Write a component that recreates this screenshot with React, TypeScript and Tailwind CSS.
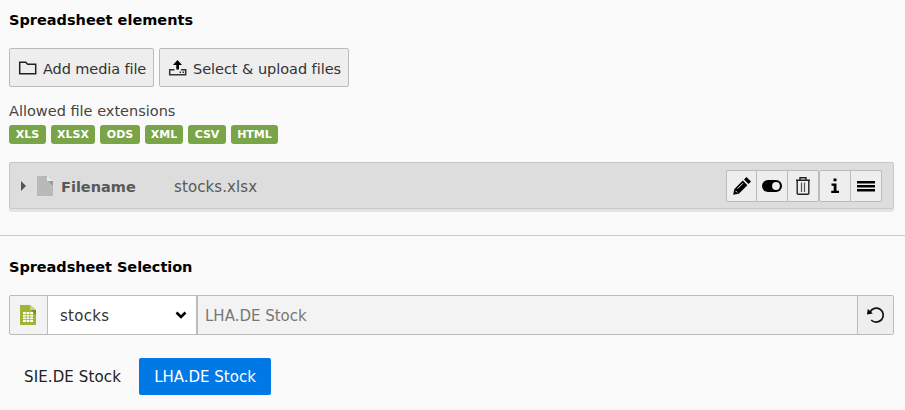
import React from "react";

const extensions = [
  { name: "XLS", width: "w-[37px]" },
  { name: "XLSX", width: "w-11" },
  { name: "ODS", width: "w-10" },
  { name: "XML", width: "w-[38px]" },
  { name: "CSV", width: "w-[38px]" },
  { name: "HTML", width: "w-[47px]" },
];

function Icon({ children }: { children: React.ReactNode }) {
  return (
    <svg width="20" height="20" viewBox="0 0 20 20" className="block shrink-0">
      {children}
    </svg>
  );
}

function FolderIcon() {
  return (
    <Icon>
      <path d="M1.7 15.8V4.2h6l2 2h8v9.6z" fill="none" stroke="#222" strokeWidth="1.5" />
    </Icon>
  );
}

function UploadIcon() {
  return (
    <Icon>
      <path d="M5 7l4.5-5L14 7h-3v4.5H8.300V7z" fill="#000" />
      <path d="M6.500 11.700H1.700v5h16v-5H13" fill="none" stroke="#333" strokeWidth="1.500" />
      <path d="M11.500 13.500H13v1.500h-1.500zM14.500 13.500H16v1.500h-1.500z" fill="#333" />
    </Icon>
  );
}

function PencilIcon() {
  return (
    <Icon>
      <path d="M1.200 18.800l1-5.600 8.600-8.600 4.600 4.600-8.600 8.600zM12 3.500L14.500 1l4.500 4.500-2.500 2.500z" fill="#000" />
      <path d="M5.500 12.700l5.500-5.500M3.500 14.800l1.700 1.700" stroke="#eee" strokeWidth="1" />
    </Icon>
  );
}

function ToggleIcon() {
  return (
    <Icon>
      <rect x="0" y="4" width="20" height="12" rx="6" fill="#000" />
      <circle cx="14" cy="10" r="3.9" fill="#eee" />
    </Icon>
  );
}

function TrashIcon() {
  return (
    <Icon>
      <path d="M3 4.300h14M7 4V1.700h6V4M4.200 5v12.300q0 1 1 1h9.600q1 0 1-1V5" fill="none" stroke="#222" strokeWidth="1.400" />
      <path d="M8.500 6.500V16M11.500 6.500V16" stroke="#555" strokeWidth="1.200" />
    </Icon>
  );
}

function InfoIcon() {
  return (
    <Icon>
      <path d="M8.500 2.500h3v2.800h-3zM6.500 7.500h5v7.200H14V17H6.200v-2.300h2.500V9.800H6.500z" fill="#000" />
    </Icon>
  );
}

function DragIcon() {
  return (
    <Icon>
      <path d="M1 5h18v2.500H1zM1 9h18v2.500H1zM1 13h18v2.500H1z" fill="#000" />
    </Icon>
  );
}

function UndoIcon() {
  return (
    <Icon>
      <path d="M4 7A7 7 0 1 1 5.200 15" fill="none" stroke="#111" strokeWidth="1.700" />
      <path d="M1 9.500l.8-5.500 5 4.500z" fill="#000" />
    </Icon>
  );
}

function ToolButton({ children, className }: { children: React.ReactNode; className: string }) {
  return (
    <button className={"flex h-8 items-center justify-center border border-[#bbb] bg-[#eee] " + className}>
      {children}
    </button>
  );
}

export default function App() {
  return (
    <main className="flex h-[410px] w-[905px] flex-col overflow-hidden bg-[#fafafa] font-['DejaVu_Sans',Verdana,sans-serif] text-[15px] leading-5 text-[#333]">
      <section className="flex h-[236px] shrink-0 flex-col border-b border-[#ccc] pl-[9px] pr-[11px] pt-2.5">
        <h2 className="text-[14.5px] font-bold leading-5 text-black">Spreadsheet elements</h2>
        <div className="mt-[18px] flex gap-[5px]">
          <button className="flex h-[39px] w-[145px] items-center gap-1.5 whitespace-nowrap rounded-[2px] border border-[#bbb] bg-[#eee] pl-2">
            <FolderIcon />
            <span className="-ml-px pt-0.5 text-[14.5px] tracking-[-0.1px]">Add media file</span>
          </button>
          <button className="flex h-[39px] w-[190px] items-center gap-1.5 whitespace-nowrap rounded-[2px] border border-[#bbb] bg-[#eee] pl-2">
            <UploadIcon />
            <span className="-ml-px pt-0.5 text-[14.5px] tracking-[-0.04px]">Select &amp; upload files</span>
          </button>
        </div>
        <div className="mt-[14px] text-[14.5px] text-[#444]">Allowed file extensions</div>
        <div className="mt-1 flex gap-[5px]">
          {extensions.map((e) => (
            <span key={e.name} className={"flex h-[19px] items-center justify-center rounded-[3px] bg-[#79a548] text-[11px] font-bold text-white " + e.width}>
              {e.name}
            </span>
          ))}
        </div>
        <div className="mt-[18px] h-[50px] rounded-[2px] bg-[#e4e4e4]">
          <div className="flex h-[47px] items-center rounded-[2px] border border-[#c8c8c8] bg-[#ddd] pl-[11px] pr-[11px] text-[#595959]">
            <svg width="6" height="10" viewBox="0 0 6 10">
              <path d="M0 0l5 5-5 5z" fill="#555" />
            </svg>
            <svg width="16" height="20" viewBox="0 0 16 20" className="ml-[10px]">
              <path d="M0 0h10l6 5v15H0z" fill="#b9b9b9" />
              <path d="M10 0v5h6z" fill="#eee" />
              <path d="M11 5h5v5z" fill="#999" />
            </svg>
            <strong className="ml-2 w-[113px] pt-0.5 text-[14.5px]">Filename</strong>
            <span className="pt-0.5 tracking-[0.1px]">stocks.xlsx</span>
            <div className="ml-auto flex">
              <ToolButton className="w-[31px] rounded-l-[2px]"><PencilIcon /></ToolButton>
              <ToolButton className="-ml-px w-8"><ToggleIcon /></ToolButton>
              <ToolButton className="-ml-px w-8 rounded-r-[2px]"><TrashIcon /></ToolButton>
              <ToolButton className="w-8 rounded-l-[2px]"><InfoIcon /></ToolButton>
              <ToolButton className="-ml-px w-8 rounded-r-[2px]"><DragIcon /></ToolButton>
            </div>
          </div>
        </div>
      </section>
      <section className="flex flex-col pl-[9px] pr-[11px] pt-[21px]">
        <h2 className="text-[14.5px] font-bold leading-5 tracking-[-0.05px] text-black">Spreadsheet Selection</h2>
        <div className="mt-[18px] flex h-10 rounded-[2px] border border-[#bbb] bg-[#f3f3f3]">
          <div className="flex w-[38px] items-center border-r border-[#bbb] pl-2.5">
            <svg width="16" height="20" viewBox="0 0 16 20">
              <path d="M0 0h10l6 5v15H0z" fill="#9fb536" />
              <path d="M10 0v5h6z" fill="#c4d37f" />
              <path d="M11 5h5v5z" fill="#788c28" />
              <path d="M3 7h10v10H3z" fill="#fff" />
              <path d="M3 9.500h10M3 12h10M3 14.500h10M6.200 7v10M9.700 7v10" stroke="#9fb536" strokeWidth=".8" />
            </svg>
          </div>
          <div className="flex w-[150px] items-center justify-between border-r-2 border-[#bbb] bg-white pl-3 pr-[9px]">
            <span className="pt-0.5 tracking-[0.3px]">stocks</span>
            <svg width="12" height="8" viewBox="0 0 12 8">
              <path d="M1.500 1.500L6 6l4.500-4.500" fill="none" stroke="#000" strokeWidth="2.600" />
            </svg>
          </div>
          <div className="flex flex-1 items-center pl-[7px] pt-0.5 text-[#777]">LHA.DE Stock</div>
          <button className="flex w-9 items-center justify-center border-l border-[#bbb] bg-[#eee]"><UndoIcon /></button>
        </div>
        <div className="mt-[23px] flex gap-[3px]">
          <button className="h-[37px] w-[127px] tracking-[0.12px] text-[#212121]">SIE.DE Stock</button>
          <button className="h-[37px] w-[132px] rounded-[2px] bg-[#0078e6] text-white">LHA.DE Stock</button>
        </div>
      </section>
    </main>
  );
}
